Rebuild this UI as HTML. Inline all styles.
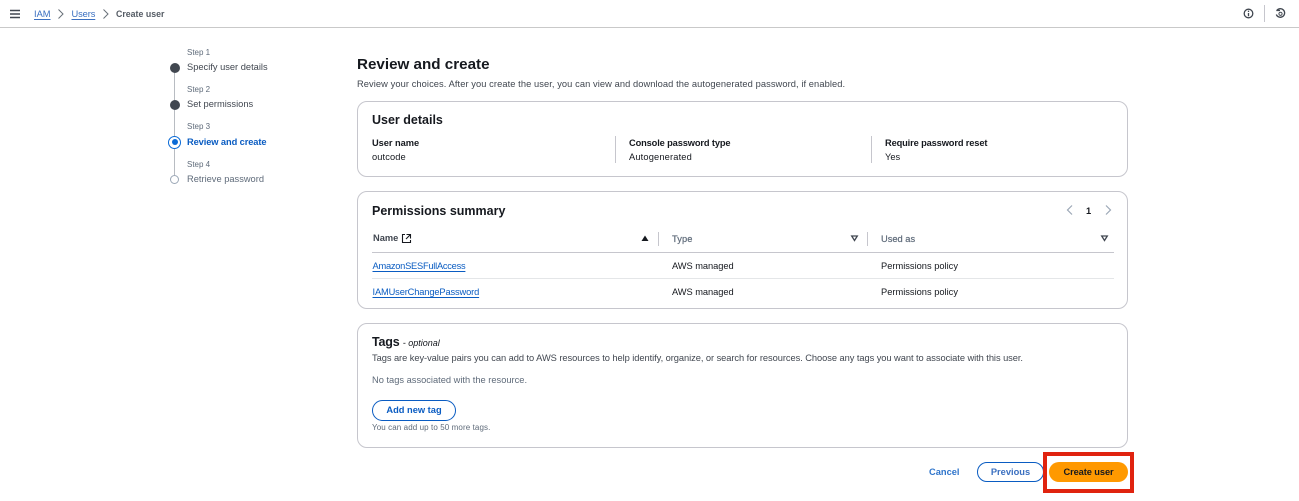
<!DOCTYPE html>
<html><head><meta charset="utf-8"><style>
html,body{margin:0;padding:0;background:#fff}
#p{position:relative;width:1299px;height:501px;overflow:hidden;background:#fff;font-family:"Liberation Sans",sans-serif;color:#16191f;font-size:9.3px}
.t{position:absolute;white-space:nowrap;line-height:12px}
.b{font-weight:700}
.g{color:#5f6b7a}
.l{color:#0a5cc2;text-decoration:underline;text-underline-offset:2px}
.card{position:absolute;left:357px;width:769px;border:1px solid #c6c6cd;border-radius:10px;box-sizing:content-box}
.h2{font-size:12.500px;font-weight:700;line-height:16px}
.v{position:absolute;width:1px;background:#c6c6cd}
.h{position:absolute;height:1px}
svg{position:absolute;overflow:visible}
.btn{position:absolute;box-sizing:border-box;border-radius:12px;font-weight:700;text-align:center;font-size:9.3px}
.m{-webkit-text-stroke:.2px currentColor}
</style></head><body><div id="p">
<div class="h" style="left:0;top:27px;width:1299px;height:1px;background:#c9c9c9"></div>
<svg style="left:10px;top:9px" width="11" height="10"><path d="M0 1.500H10M0 5H10M0 8.500H10" stroke="#414750" stroke-width="1.500" fill="none"/></svg>
<div class="t l" style="left:34px;top:8px;color:#3a6fc0">IAM</div>
<svg style="left:58px;top:9px" width="6" height="10"><path d="M.5 .5L5 5L.5 9.500" stroke="#687078" fill="none"/></svg>
<div class="t l" style="left:71.500px;top:8px;color:#3a6fc0;letter-spacing:-.1px">Users</div>
<svg style="left:103px;top:9px" width="6" height="10"><path d="M.5 .5L5 5L.5 9.500" stroke="#687078" fill="none"/></svg>
<div class="t b" style="left:116px;top:8px;color:#545b64;font-size:8.800px">Create user</div>
<svg style="left:1243px;top:8px" width="11" height="11"><circle cx="5.500" cy="5.500" r="4.300" stroke="#414750" stroke-width="1.300" fill="none"/><path d="M5.500 5V8.200M5.500 2.600V4" stroke="#414750" stroke-width="1.300"/></svg>
<div class="v" style="left:1264px;top:5px;height:17px"></div>
<svg style="left:1275px;top:8px" width="11" height="11"><path d="M1.800 2.500A4.300 4.300 0 1 1 1.300 6.500M1.300 2.500H5" stroke="#414750" stroke-width="1.300" fill="none"/><circle cx="5.500" cy="5.800" r="1.600" stroke="#414750" fill="none"/></svg>

<div class="v" style="left:174px;top:72px;height:103px;background:#b8bcc2"></div>
<div class="t g" style="left:187px;top:47px;font-size:8px">Step 1</div>
<div class="t" style="left:187px;top:61px;color:#414750">Specify user details</div>
<div style="position:absolute;left:169.500px;top:62.500px;width:10px;height:10px;border-radius:50%;background:#414750"></div>
<div class="t g" style="left:187px;top:84px;font-size:8px">Step 2</div>
<div class="t" style="left:187px;top:98px;color:#414750">Set permissions</div>
<div style="position:absolute;left:169.500px;top:99.500px;width:10px;height:10px;border-radius:50%;background:#414750"></div>
<div class="t g" style="left:187px;top:121px;font-size:8px">Step 3</div>
<div class="t b" style="left:187px;top:136px;color:#0a5cc2;letter-spacing:-.1px">Review and create</div>
<div style="position:absolute;left:168px;top:135.500px;width:13px;height:13px;box-sizing:border-box;border-radius:50%;background:#fff;border:1.500px solid #0a6ad6"></div>
<div style="position:absolute;left:171.500px;top:139px;width:6px;height:6px;border-radius:50%;background:#0a6ad6"></div>
<div class="t g" style="left:187px;top:159px;font-size:8px">Step 4</div>
<div class="t g" style="left:187px;top:173px">Retrieve password</div>
<div style="position:absolute;left:170px;top:174.500px;width:9px;height:9px;box-sizing:border-box;border-radius:50%;background:#fff;border:1px solid #9ba7b6"></div>

<div class="t" style="left:357px;top:55px;font-size:15.200px;font-weight:700;line-height:19px">Review and create</div>
<div class="t" style="left:357px;top:78px;color:#414750;letter-spacing:.08px">Review your choices. After you create the user, you can view and download the autogenerated password, if enabled.</div>

<div class="card" style="top:101px;height:74px"></div>
<div class="t h2" style="left:372px;top:112px">User details</div>
<div class="t b" style="left:372px;top:137px;letter-spacing:-.05px">User name</div>
<div class="t" style="left:372px;top:151px;letter-spacing:.1px">outcode</div>
<div class="v" style="left:615px;top:136px;height:27px"></div>
<div class="t b" style="left:629px;top:137px;letter-spacing:-.14px">Console password type</div>
<div class="t" style="left:629px;top:151px;letter-spacing:.15px">Autogenerated</div>
<div class="v" style="left:871px;top:136px;height:27px"></div>
<div class="t b" style="left:885px;top:137px;letter-spacing:-.14px">Require password reset</div>
<div class="t" style="left:885px;top:151px">Yes</div>

<div class="card" style="top:191px;height:116px"></div>
<div class="t h2" style="left:372px;top:203px">Permissions summary</div>
<svg style="left:1066px;top:205px" width="7" height="10"><path d="M6 .5L1.500 5L6 9.500" stroke="#9ba7b6" stroke-width="1.200" fill="none"/></svg>
<div class="t b" style="left:1086px;top:205px">1</div>
<svg style="left:1105px;top:205px" width="7" height="10"><path d="M1 .5L5.500 5L1 9.500" stroke="#9ba7b6" stroke-width="1.200" fill="none"/></svg>
<div class="t b" style="left:373px;top:232px;color:#414750">Name</div>
<svg style="left:402px;top:234px" width="9" height="9"><path d="M3 .5H.5V8.500H8.500V6M4.500 .5H8.500V4.500M8.500 .5L4 5" stroke="#16191f" stroke-width="1.100" fill="none"/></svg>
<svg style="left:641px;top:235px" width="8" height="7"><path d="M4 .5L7.500 6H.5Z" fill="#16191f"/></svg>
<div class="v" style="left:658px;top:232px;height:14px"></div>
<div class="t m" style="left:672px;top:233px;color:#5f6b7a;letter-spacing:.1px">Type</div>
<svg style="left:851px;top:235px" width="7" height="7"><path d="M.7 1H6.300L3.500 5.500Z" stroke="#414750" stroke-width="1.300" fill="none"/></svg>
<div class="v" style="left:867px;top:232px;height:14px"></div>
<div class="t m" style="left:881px;top:233px;color:#5f6b7a">Used as</div>
<svg style="left:1101px;top:235px" width="7" height="7"><path d="M.7 1H6.300L3.500 5.500Z" stroke="#414750" stroke-width="1.300" fill="none"/></svg>
<div class="h" style="left:372px;top:252px;width:742px;background:#c6c6cd"></div>
<div class="t l" style="left:372.500px;top:260px;letter-spacing:-.25px">AmazonSESFullAccess</div>
<div class="t" style="left:672px;top:260px;letter-spacing:-.05px">AWS managed</div>
<div class="t" style="left:881px;top:260px">Permissions policy</div>
<div class="h" style="left:372px;top:278px;width:742px;background:#e4e6e8"></div>
<div class="t l" style="left:372.500px;top:286px;letter-spacing:-.14px">IAMUserChangePassword</div>
<div class="t" style="left:672px;top:286px;letter-spacing:-.05px">AWS managed</div>
<div class="t" style="left:881px;top:286px">Permissions policy</div>

<div class="card" style="top:323px;height:123px"></div>
<div class="t h2" style="left:372px;top:334px;letter-spacing:-.2px">Tags <span style="font-size:9px;font-weight:400;font-style:italic;letter-spacing:0">- optional</span></div>
<div class="t" style="left:372px;top:352px;color:#414750;letter-spacing:-.056px">Tags are key-value pairs you can add to AWS resources to help identify, organize, or search for resources. Choose any tags you want to associate with this user.</div>
<div class="t g" style="left:372px;top:374px">No tags associated with the resource.</div>
<div class="btn" style="left:372px;top:400px;width:84px;height:21px;border:1px solid #0a5cc2;border-radius:11px;color:#0a5cc2;line-height:19px">Add new tag</div>
<div class="t g" style="left:372px;top:422px;font-size:8px;letter-spacing:.1px">You can add up to 50 more tags.</div>

<div class="t b" style="left:929px;top:466px;color:#0a5cc2;opacity:.85">Cancel</div>
<div class="btn" style="left:977px;top:462px;width:67px;height:20px;border:1px solid #0a5cc2;border-radius:10px;color:#3a6fc0;line-height:18px">Previous</div>
<div style="position:absolute;left:1043px;top:452px;width:91px;height:41px;box-sizing:border-box;border:4px solid #e0230f"></div>
<div class="btn" style="left:1049px;top:462px;width:79px;height:20px;border-radius:10px;background:#ff9900;color:#16191f;line-height:20px;letter-spacing:-.1px">Create user</div>
</div></body></html>
